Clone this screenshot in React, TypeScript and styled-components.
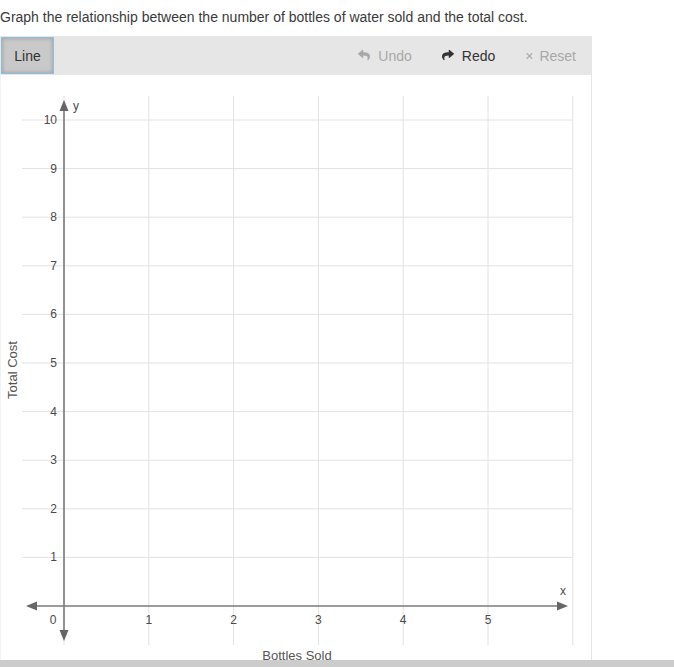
import React from "react";
import styled, { createGlobalStyle } from "styled-components";
import { FaReply, FaShare } from "react-icons/fa";

const GlobalStyle = createGlobalStyle`
  body {
    margin: 0;
    background: #fff;
    font-family: "Liberation Sans", Arial, sans-serif;
    color: #333;
  }
`;

// graph geometry, in panel coordinates (panel starts at page y=75)
const X0 = 63;
const XU = 84.8;
const Y0 = 531;
const YU = 48.6;
const LEFT = 21;
const RIGHT = 571;
const TOP = 21;
const BOTTOM = 570;

const px = (v: number) => X0 + v * XU;
const py = (v: number) => Y0 - v * YU;

const App = () => {
  const xs = [1, 2, 3, 4, 5, 6];
  const ys = [1, 2, 3, 4, 5, 6, 7, 8, 9, 10];

  return (
    <>
      <GlobalStyle />
      <Page>
        <Prompt>Graph the relationship between the number of bottles of water sold and the total cost.</Prompt>
        <Toolbar>
          <ToolButton $active>Line</ToolButton>
          <Actions>
            <Action $disabled>
              <FaReply size={12} />
              Undo
            </Action>
            <Action>
              <FaShare size={12} />
              Redo
            </Action>
            <Action $disabled>
              <Cross>×</Cross>
              Reset
            </Action>
          </Actions>
        </Toolbar>
        <Panel>
          <svg width="591" height="585">
            {xs.map((v) => (
              <line key={"vx" + v} x1={px(v)} x2={px(v)} y1={TOP} y2={BOTTOM} stroke="#e2e2e2" strokeWidth="1" />
            ))}
            <line x1={X0} x2={X0} y1={TOP} y2={BOTTOM} stroke="#e2e2e2" />
            {ys.map((v) => (
              <line key={"hy" + v} x1={LEFT} x2={RIGHT} y1={py(v)} y2={py(v)} stroke="#e2e2e2" strokeWidth="1" />
            ))}

            {/* axes */}
            <line x1={33} x2={558} y1={Y0} y2={Y0} stroke="#7a7a7a" strokeWidth="1.6" />
            <polygon points={`25,${Y0} 36,${Y0 - 4.5} 36,${Y0 + 4.5}`} fill="#666" />
            <polygon points={`567,${Y0} 556,${Y0 - 4.5} 556,${Y0 + 4.5}`} fill="#666" />
            <line x1={X0} x2={X0} y1={33} y2={556} stroke="#7a7a7a" strokeWidth="1.6" />
            <polygon points={`${X0},25 ${X0 - 4.5},36 ${X0 + 4.5},36`} fill="#666" />
            <polygon points={`${X0},566 ${X0 - 4.5},555 ${X0 + 4.5},555`} fill="#666" />

            {ys.map((v) => (
              <TickText key={"ly" + v} x={56} y={py(v) + 4} textAnchor="end">
                {v}
              </TickText>
            ))}
            {[1, 2, 3, 4, 5].map((v) => (
              <TickText key={"lx" + v} x={px(v)} y={549} textAnchor="middle">
                {v}
              </TickText>
            ))}
            <TickText x={52} y={549} textAnchor="middle">0</TickText>
            <TickText x={75} y={35} textAnchor="middle">y</TickText>
            <TickText x={562} y={520} textAnchor="middle">x</TickText>

            <AxisTitle x={296} y={585} textAnchor="middle">Bottles Sold</AxisTitle>
            <AxisTitle x={16} y={295} textAnchor="middle" transform="rotate(-90 16 295)">
              Total Cost
            </AxisTitle>
          </svg>
        </Panel>
      </Page>
      <BottomBar />
    </>
  );
};

export default App;

const Page = styled.div`
  width: 592px;
`;

const Prompt = styled.div`
  height: 36px;
  display: flex;
  align-items: center;
  padding-bottom: 3px;
  box-sizing: border-box;
  font-size: 14px;
  color: #3a3a3a;
  white-space: nowrap;
`;

const Toolbar = styled.div`
  height: 39px;
  background: #e6e6e6;
  display: flex;
  align-items: stretch;
  justify-content: space-between;
  padding: 1px;
  box-sizing: border-box;
`;

const ToolButton = styled.button<{ $active?: boolean }>`
  width: 53px;
  border: 1px solid ${(p) => (p.$active ? "#8cbfe0" : "transparent")};
  background: ${(p) => (p.$active ? "#c9c9c9" : "transparent")};
  box-shadow: ${(p) => (p.$active ? "inset 0 0 4px rgba(0,0,0,0.25)" : "none")};
  font-family: "Liberation Sans", Arial, sans-serif;
  font-size: 14px;
  color: #333;
  padding: 0;
  cursor: pointer;
`;

const Actions = styled.div`
  display: flex;
  align-items: center;
`;

const Action = styled.div<{ $disabled?: boolean }>`
  display: flex;
  align-items: center;
  gap: 8px;
  padding: 0 15px;
  padding-top: 1px;
  font-size: 14px;
  color: ${(p) => (p.$disabled ? "#a8a8a8" : "#333")};
  svg {
    margin-top: -2px;
  }
`;

const Cross = styled.span`
  font-size: 14px;
  margin-right: -2px;
`;

const Panel = styled.div`
  height: 585px;
  border-right: 1px solid #e6e6e6;
  border-left: 1px solid #f2f2f2;
  overflow: hidden;
  svg {
    display: block;
  }
`;

const TickText = styled.text`
  font-family: "Liberation Sans", Arial, sans-serif;
  font-size: 12px;
  fill: #4a4a4a;
`;

const AxisTitle = styled.text`
  font-family: "Liberation Sans", Arial, sans-serif;
  font-size: 13px;
  fill: #555;
`;

const BottomBar = styled.div`
  height: 10px;
  background: #cccccc;
`;
